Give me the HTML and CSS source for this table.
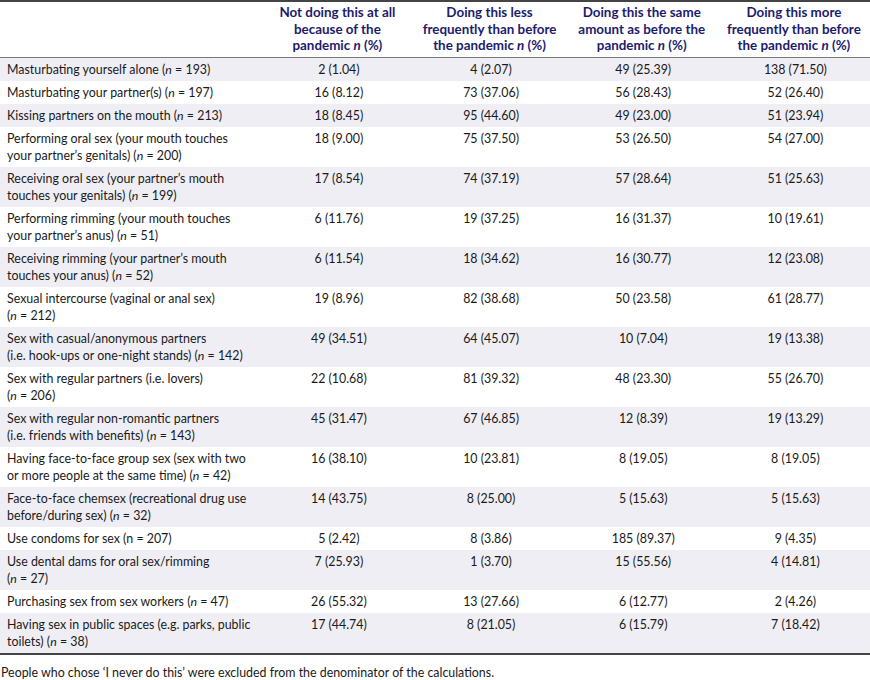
FILE: index.html
```html
<!DOCTYPE html>
<html>
<head>
<meta charset="utf-8">
<link rel="stylesheet" href="styles.css">
</head>
<body>
<table class="tbl">
<colgroup><col class="c-label"><col class="c-val"><col class="c-val"><col class="c-val"><col class="c-val"></colgroup>
<thead>
<tr>
<th class="h-label"></th>
<th>Not doing this at all because of the pandemic <i>n</i> (%)</th>
<th>Doing this less frequently than before the pandemic <i>n</i> (%)</th>
<th>Doing this the same amount as before the pandemic <i>n</i> (%)</th>
<th>Doing this more frequently than before the pandemic <i>n</i> (%)</th>
</tr>
</thead>
<tbody>
<tr><td>Masturbating yourself alone (<i>n</i> = 193)</td><td>2 (1.04)</td><td>4 (2.07)</td><td>49 (25.39)</td><td>138 (71.50)</td></tr>
<tr><td>Masturbating your partner(s) (<i>n</i> = 197)</td><td>16 (8.12)</td><td>73 (37.06)</td><td>56 (28.43)</td><td>52 (26.40)</td></tr>
<tr><td>Kissing partners on the mouth (<i>n</i> = 213)</td><td>18 (8.45)</td><td>95 (44.60)</td><td>49 (23.00)</td><td>51 (23.94)</td></tr>
<tr><td>Performing oral sex (your mouth touches<br>your partner’s genitals) (<i>n</i> = 200)</td><td>18 (9.00)</td><td>75 (37.50)</td><td>53 (26.50)</td><td>54 (27.00)</td></tr>
<tr><td>Receiving oral sex (your partner’s mouth<br>touches your genitals) (<i>n</i> = 199)</td><td>17 (8.54)</td><td>74 (37.19)</td><td>57 (28.64)</td><td>51 (25.63)</td></tr>
<tr><td>Performing rimming (your mouth touches<br>your partner’s anus) (<i>n</i> = 51)</td><td>6 (11.76)</td><td>19 (37.25)</td><td>16 (31.37)</td><td>10 (19.61)</td></tr>
<tr><td>Receiving rimming (your partner’s mouth<br>touches your anus) (<i>n</i> = 52)</td><td>6 (11.54)</td><td>18 (34.62)</td><td>16 (30.77)</td><td>12 (23.08)</td></tr>
<tr><td>Sexual intercourse (vaginal or anal sex)<br>(<i>n</i> = 212)</td><td>19 (8.96)</td><td>82 (38.68)</td><td>50 (23.58)</td><td>61 (28.77)</td></tr>
<tr><td>Sex with casual/anonymous partners<br>(i.e. hook-ups or one-night stands) (<i>n</i> = 142)</td><td>49 (34.51)</td><td>64 (45.07)</td><td>10 (7.04)</td><td>19 (13.38)</td></tr>
<tr><td>Sex with regular partners (i.e. lovers)<br>(<i>n</i> = 206)</td><td>22 (10.68)</td><td>81 (39.32)</td><td>48 (23.30)</td><td>55 (26.70)</td></tr>
<tr><td>Sex with regular non-romantic partners<br>(i.e. friends with benefits) (<i>n</i> = 143)</td><td>45 (31.47)</td><td>67 (46.85)</td><td>12 (8.39)</td><td>19 (13.29)</td></tr>
<tr><td>Having face-to-face group sex (sex with two<br>or more people at the same time) (<i>n</i> = 42)</td><td>16 (38.10)</td><td>10 (23.81)</td><td>8 (19.05)</td><td>8 (19.05)</td></tr>
<tr><td>Face-to-face chemsex (recreational drug use<br>before/during sex) (<i>n</i> = 32)</td><td>14 (43.75)</td><td>8 (25.00)</td><td>5 (15.63)</td><td>5 (15.63)</td></tr>
<tr><td>Use condoms for sex (n = 207)</td><td>5 (2.42)</td><td>8 (3.86)</td><td>185 (89.37)</td><td>9 (4.35)</td></tr>
<tr><td>Use dental dams for oral sex/rimming<br>(<i>n</i> = 27)</td><td>7 (25.93)</td><td>1 (3.70)</td><td>15 (55.56)</td><td>4 (14.81)</td></tr>
<tr><td>Purchasing sex from sex workers (<i>n</i> = 47)</td><td>26 (55.32)</td><td>13 (27.66)</td><td>6 (12.77)</td><td>2 (4.26)</td></tr>
<tr><td>Having sex in public spaces (e.g. parks, public<br>toilets) (<i>n</i> = 38)</td><td>17 (44.74)</td><td>8 (21.05)</td><td>6 (15.79)</td><td>7 (18.42)</td></tr>
</tbody>
</table>
<p class="note">People who chose ‘I never do this’ were excluded from the denominator of the calculations.</p>
</body>
</html>
```
FILE: styles.css
```css
html, body {
  margin: 0;
  padding: 0;
  background: #ffffff;
}
body {
  font-family: Lato, "Open Sans", "Liberation Sans", sans-serif;
  font-size: 12.4px;
  color: #1a1a1a;
}
.tbl {
  width: 870px;
  border-collapse: collapse;
  table-layout: fixed;
  border-top: 2px solid #444;
  border-bottom: 2px solid #444;
}
.c-label { width: 261px; }
.c-val { width: 152px; }
.tbl th {
  color: #1c1c6e;
  font-weight: 700;
  font-size: 13.4px;
  line-height: 16.5px;
  text-align: center;
  vertical-align: top;
  padding: 2px 5px 3px;
  border-bottom: 1px solid #777;
}
.tbl td {
  line-height: 17px;
  padding: 3px 4px 3px 7px;
  vertical-align: top;
  text-align: center;
}
.tbl td:first-child {
  text-align: left;
  white-space: nowrap;
}
.tbl tbody tr:nth-child(odd) td {
  background: #efeef5;
}
.note {
  margin: 9px 0 0 0;
  padding-left: 1px;
  line-height: 17px;
}
```
